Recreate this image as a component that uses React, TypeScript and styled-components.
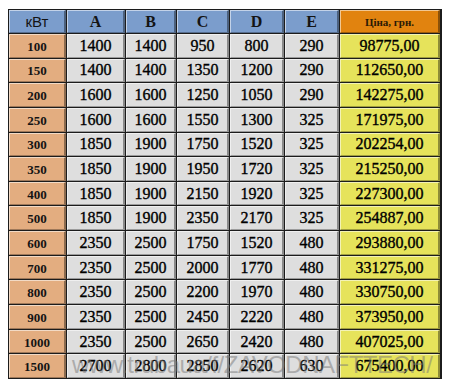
import React from "react";
import styled, { createGlobalStyle, css } from "styled-components";

const Global = createGlobalStyle`
  html, body { margin: 0; padding: 0; background: #ffffff; }
  #root { width: 450px; height: 387px; }
`;

type Tone = "blue" | "peach" | "grey" | "orange" | "yellow";

const tones: Record<Tone, string> = {
  blue: "#7b9dcc",
  peach: "#e3ad80",
  grey: "#dedede",
  orange: "#e1830f",
  yellow: "#e6e35b",
};

const Page = styled.div`
  padding: 9px 0 0 8px;
`;

const Table = styled.div`
  position: relative;
  display: grid;
  grid-template-columns: 57px 58px 50px 52px 54px 54px 100px;
  grid-template-rows: 23px repeat(14, 1fr);
  gap: 1px;
  width: 434px;
  height: 370px;
  padding: 1px;
  box-sizing: border-box;
  background: #1c1c1c;
`;

const Cell = styled.div<{ $tone: Tone; $kind?: "head" | "kw" | "value" | "price" | "unit" | "priceHead" }>`
  display: flex;
  align-items: center;
  justify-content: center;
  box-sizing: border-box;
  background: ${(p) => tones[p.$tone]};
  border-top: 1px solid rgba(255, 255, 255, 0.55);
  border-left: 1px solid rgba(255, 255, 255, 0.55);
  border-right: 2px solid rgba(0, 0, 0, 0.38);
  border-bottom: 1px solid rgba(0, 0, 0, 0.3);
  color: #141414;
  font-family: "Liberation Serif", "Times New Roman", serif;
  white-space: nowrap;
  ${(p) =>
    p.$kind === "head" &&
    css`
      font-weight: bold;
      font-size: 16px;
    `}
  ${(p) =>
    p.$kind === "unit" &&
    css`
      font-family: "Liberation Sans", Arial, sans-serif;
      font-size: 15px;
    `}
  ${(p) =>
    p.$kind === "priceHead" &&
    css`
      font-weight: bold;
      font-size: 11px;
      color: #2a1a05;
    `}
  ${(p) =>
    p.$kind === "kw" &&
    css`
      font-weight: bold;
      font-size: 13px;
      padding-top: 2px;
    `}
  ${(p) =>
    (p.$kind === "value" || p.$kind === "price") &&
    css`
      font-size: 16px;
      color: #000;
      -webkit-text-stroke: 0.35px #000;
    `}
`;

const Watermark = styled.div`
  position: absolute;
  left: 64px;
  bottom: 0;
  font-family: "Liberation Sans", Arial, sans-serif;
  font-size: 24px;
  letter-spacing: -0.5px;
  color: rgba(120, 120, 120, 0.5);
  white-space: nowrap;
  pointer-events: none;
`;

const rows: [string, number, number, number, number, number, string][] = [
  ["100", 1400, 1400, 950, 800, 290, "98775,00"],
  ["150", 1400, 1400, 1350, 1200, 290, "112650,00"],
  ["200", 1600, 1600, 1250, 1050, 290, "142275,00"],
  ["250", 1600, 1600, 1550, 1300, 325, "171975,00"],
  ["300", 1850, 1900, 1750, 1520, 325, "202254,00"],
  ["350", 1850, 1900, 1950, 1720, 325, "215250,00"],
  ["400", 1850, 1900, 2150, 1920, 325, "227300,00"],
  ["500", 1850, 1900, 2350, 2170, 325, "254887,00"],
  ["600", 2350, 2500, 1750, 1520, 480, "293880,00"],
  ["700", 2350, 2500, 2000, 1770, 480, "331275,00"],
  ["800", 2350, 2500, 2200, 1970, 480, "330750,00"],
  ["900", 2350, 2500, 2450, 2220, 480, "373950,00"],
  ["1000", 2350, 2500, 2650, 2420, 480, "407025,00"],
  ["1500", 2700, 2800, 2850, 2620, 630, "675400,00"],
];

export default function App() {
  return (
    <>
      <Global />
      <Page>
        <Table>
          <Cell $tone="blue" $kind="unit">кВт</Cell>
          {["A", "B", "C", "D", "E"].map((h) => (
            <Cell key={h} $tone="blue" $kind="head">
              {h}
            </Cell>
          ))}
          <Cell $tone="orange" $kind="priceHead">Ціна, грн.</Cell>
          {rows.map((r) => (
            <React.Fragment key={r[0]}>
              <Cell $tone="peach" $kind="kw">{r[0]}</Cell>
              {r.slice(1, 6).map((v, i) => (
                <Cell key={i} $tone="grey" $kind="value">
                  {v}
                </Cell>
              ))}
              <Cell $tone="yellow" $kind="price">{r[6]}</Cell>
            </React.Fragment>
          ))}
          <Watermark>www.trubaua/f/ZAVODNAFTTECH/</Watermark>
        </Table>
      </Page>
    </>
  );
}
